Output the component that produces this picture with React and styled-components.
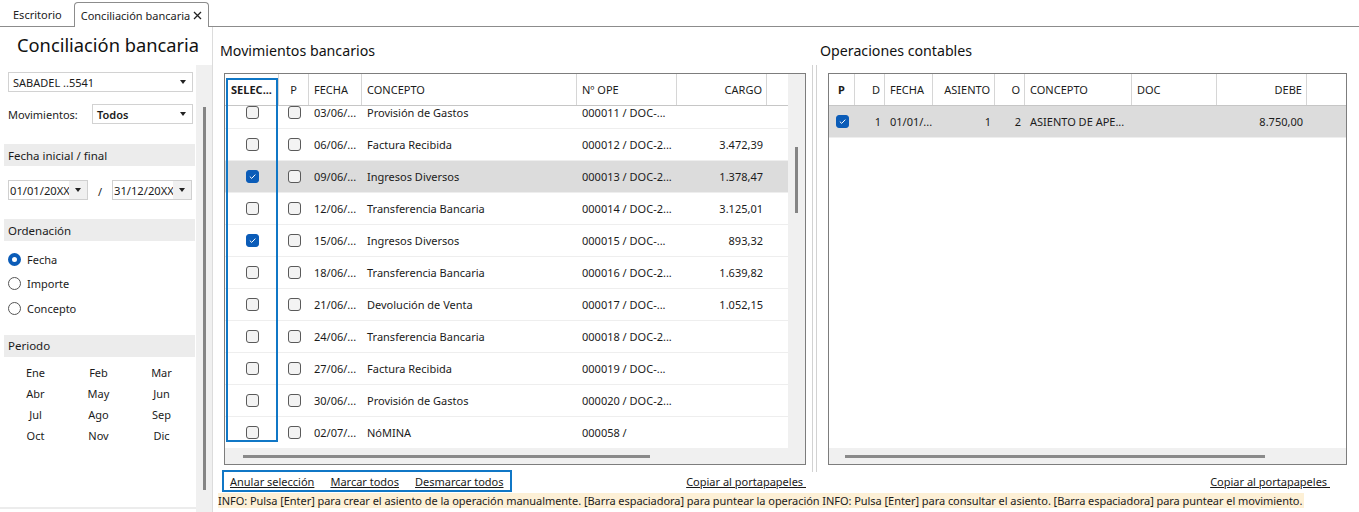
import React from "react";
import styled, { createGlobalStyle } from "styled-components";

const GlobalStyle = createGlobalStyle`
  html, body { margin: 0; padding: 0; background: #fff; }
  body {
    font-family: "Noto Sans", "Open Sans", sans-serif;
    font-size: 11px;
    color: #1b1b1b;
  }
  * { box-sizing: border-box; }
`;

const Page = styled.div`
  width: 1359px;
  height: 512px;
  overflow: hidden;
  display: flex;
  flex-direction: column;
`;

/* ---------- tabs ---------- */
const TabBar = styled.div`
  height: 27px;
  flex-shrink: 0;
  display: flex;
  align-items: flex-end;
  padding-left: 6px;
  border-bottom: 1px solid #8c8c8c;
`;

const Tab = styled.div`
  height: ${({ $active }) => ($active ? "25px" : "24px")};
  margin-bottom: ${({ $active }) => ($active ? "-1px" : "0")};
  padding: 0 6px;
  margin-right: ${({ $active }) => ($active ? "0" : "5px")};
  display: flex;
  align-items: center;
  gap: 3px;
  background: #fff;
  border: ${({ $active }) => ($active ? "1px solid #8c8c8c" : "1px solid transparent")};
  border-bottom: none;
  border-radius: 4px 4px 0 0;
  color: #222;
`;

const Body = styled.div`
  flex: 1;
  display: flex;
  min-height: 0;
`;

/* ---------- sidebar ---------- */
const Sidebar = styled.div`
  width: 213px;
  flex-shrink: 0;
  display: flex;
  flex-direction: column;
  border-right: 1px solid #dcdcdc;
`;

const SideTitle = styled.div`
  height: 38px;
  padding: 5px 0 0 17px;
  font-size: 18.3px;
  line-height: 26px;
  color: #111;
  white-space: nowrap;
`;

const SideScroll = styled.div`
  flex: 1;
  display: flex;
  min-height: 0;
`;

const SideContent = styled.div`
  width: 196px;
  padding: 7px 0 0 4px;
  margin-bottom: 3px;
  border-bottom: 2px solid #ececec;
`;

const ScrollTrack = styled.div`
  width: 16px;
  background: #f0f0f0;
  padding-left: 7px;
`;

const ScrollThumbV = styled.div`
  width: 3px;
  height: ${({ $h }) => $h}px;
  margin-top: ${({ $top }) => $top}px;
  background: #858585;
`;

const SelectBox = styled.div`
  width: ${({ $w }) => $w}px;
  height: 20px;
  margin-left: ${({ $ml }) => $ml || 0}px;
  border: 1px solid #d2d2d2;
  display: flex;
  align-items: center;
  justify-content: space-between;
  padding-left: 4px;
  font-weight: ${({ $bold }) => ($bold ? 600 : 400)};
`;

const Caret = styled.span`
  width: 0;
  height: 0;
  margin-right: ${({ $mr }) => $mr ?? 6}px;
  border-left: 3.5px solid transparent;
  border-right: 3.5px solid transparent;
  border-top: 4px solid #222;
`;

const FieldRow = styled.div`
  display: flex;
  align-items: center;
  margin-top: ${({ $mt }) => $mt}px;
  padding-left: 4px;
`;

const FieldLabel = styled.span`
  width: 84px;
`;

const SectionHead = styled.div`
  width: 191px;
  height: 22px;
  margin-top: ${({ $mt }) => $mt}px;
  background: #ececec;
  padding-left: 4px;
  display: flex;
  align-items: center;
  font-size: 11.5px;
  color: #1b1b1b;
`;

const DateBox = styled.div`
  width: 80px;
  height: 20px;
  border: 1px solid #d0d0d0;
  display: flex;
`;

const DateText = styled.span`
  flex: 1;
  padding-left: 1px;
  display: flex;
  align-items: center;
  font-size: 11.2px;
  white-space: nowrap;
  overflow: hidden;
`;

const DateBtn = styled.span`
  width: 18px;
  background: #f0f0f0;
  display: flex;
  align-items: center;
  justify-content: center;
`;

const Slash = styled.span`
  width: 24px;
  text-align: center;
  padding-top: 3px;
`;

const RadioList = styled.div`
  margin-top: 6px;
  padding-left: 4px;
`;

const RadioRow = styled.div`
  height: 24.5px;
  display: flex;
  align-items: center;
  gap: 6px;
`;

const RadioDot = styled.span`
  width: 13px;
  height: 13px;
  border-radius: 50%;
  border: ${({ $on }) => ($on ? "4px solid #0b5cb8" : "1px solid #555")};
  background: #fff;
`;

const MonthGrid = styled.div`
  margin-top: 5px;
  display: grid;
  grid-template-columns: repeat(3, 63px);
  grid-auto-rows: 21px;
  align-items: center;
  text-align: center;
`;

/* ---------- main ---------- */
const Main = styled.div`
  flex: 1;
  display: flex;
  flex-direction: column;
  padding-left: 5px;
  min-width: 0;
`;

const PanelsRow = styled.div`
  display: flex;
`;

const Panel = styled.div`
  width: ${({ $w }) => ($w ? `${$w}px` : "auto")};
  flex: ${({ $w }) => ($w ? "none" : "1")};
  display: flex;
  flex-direction: column;
`;

const PanelTitle = styled.div`
  padding: 14px 0 0 2px;
  height: 46px;
  font-size: 14.2px;
  line-height: 20px;
  color: #111;
`;

const Separator = styled.div`
  width: 10px;
  flex-shrink: 0;
  padding-left: 4px;
  padding-top: 38px;
`;

const SepLines = styled.div`
  width: 5px;
  height: 407px;
  border-left: 1px solid #d2d2d2;
  border-right: 1px solid #d2d2d2;
`;

const Grid = styled.div`
  position: relative;
  margin-left: ${({ $ml }) => $ml}px;
  width: ${({ $w }) => $w}px;
  height: 392px;
  border: 1px solid #7d7d7d;
  display: flex;
`;

const GridMain = styled.div`
  flex: 1;
  min-width: 0;
  display: flex;
  flex-direction: column;
`;

const HeadRow = styled.div`
  height: 32px;
  flex-shrink: 0;
  display: flex;
  border-bottom: 1px solid #c6c6c6;
`;

const Cell = styled.div`
  width: ${({ $w }) => ($w ? `${$w}px` : "auto")};
  flex: ${({ $w }) => ($w ? "none" : "1")};
  display: flex;
  align-items: center;
  justify-content: ${({ $align }) =>
    $align === "right" ? "flex-end" : $align === "center" ? "center" : "flex-start"};
  padding: 0 ${({ $align }) => ($align === "right" ? "4px" : "0")} 0
    ${({ $align }) => ($align === "left" ? "5px" : "0")};
  white-space: nowrap;
  overflow: hidden;
`;

const HeadCell = styled(Cell)`
  border-right: ${({ $last }) => ($last ? "none" : "1px solid #d6d6d6")};
  font-weight: ${({ $bold }) => ($bold ? 700 : 400)};
`;

const GridBody = styled.div`
  flex: 1;
  overflow: hidden;
`;

const BodyInner = styled.div`
  margin-top: ${({ $offset }) => $offset}px;
`;

const Row = styled.div`
  height: 32px;
  display: flex;
  border-bottom: 1px solid #eeeeee;
  background: ${({ $hl }) => ($hl ? "#dcdcdc" : "#fff")};
`;

const HScroll = styled.div`
  height: 16px;
  flex-shrink: 0;
  background: #f0f0f0;
  padding-top: 7px;
`;

const ThumbH = styled.div`
  height: 3px;
  width: ${({ $w }) => $w}px;
  margin-left: ${({ $left }) => $left}px;
  background: #8a8a8a;
`;

const VScroll = styled.div`
  width: 17px;
  flex-shrink: 0;
  background: #f0f0f0;
  padding-left: 7px;
`;

const FocusBox = styled.div`
  position: absolute;
  left: 1px;
  top: 4px;
  width: 52px;
  height: 364px;
  border: 2px solid #1077c6;
  pointer-events: none;
`;

const Box = styled.span`
  width: 13px;
  height: 13px;
  border-radius: 3px;
  border: 1px solid ${({ $on }) => ($on ? "#0b5cb8" : "#5a5a5a")};
  background: ${({ $on }) => ($on ? "#0b5cb8" : "#f3f3f3")};
  display: flex;
  align-items: center;
  justify-content: center;
`;

const LinksRow = styled.div`
  margin-top: 5px;
  height: 22px;
  display: flex;
  align-items: center;
  justify-content: space-between;
  padding-left: ${({ $pl }) => $pl || 0}px;
  padding-right: ${({ $pr }) => $pr || 0}px;
`;

const LinkBox = styled.div`
  height: 22px;
  display: flex;
  align-items: center;
  gap: 16px;
  padding: 0 6px;
  border: 2px solid #1077c6;
`;

const LinkText = styled.span`
  text-decoration: underline;
  color: #1a1a1a;
  white-space: pre;
`;

const InfoLine = styled.div`
  margin-top: 1px;
  height: 16px;
  white-space: nowrap;
`;

const InfoText = styled.span`
  background: #fdf0d6;
  line-height: 16px;
  letter-spacing: -0.05px;
  padding-right: 2px;
`;

const Checkbox = ({ on }) => (
  <Box $on={on}>
    {on && (
      <svg width="9" height="9" viewBox="0 0 9 9">
        <path d="M1.8 4.6 L3.7 6.4 L7.3 2.6" fill="none" stroke="#fff" strokeWidth="1" />
      </svg>
    )}
  </Box>
);

const leftCols = [
  { key: "sel", label: "SELEC...", w: 54, align: "center", bold: true, check: true },
  { key: "p", label: "P", w: 30, align: "center", check: true },
  { key: "fecha", label: "FECHA", w: 53, align: "left" },
  { key: "concepto", label: "CONCEPTO", w: 215, align: "left" },
  { key: "ope", label: "Nº OPE", w: 100, align: "left" },
  { key: "cargo", label: "CARGO", w: 90, align: "right" },
  { key: "rest", label: "", align: "left", last: true },
];

const leftRows = [
  { sel: false, p: false, fecha: "03/06/...", concepto: "Provisión de Gastos", ope: "000011 / DOC-...", cargo: "" },
  { sel: false, p: false, fecha: "06/06/...", concepto: "Factura Recibida", ope: "000012 / DOC-2...", cargo: "3.472,39" },
  { sel: true, p: false, fecha: "09/06/...", concepto: "Ingresos Diversos", ope: "000013 / DOC-2...", cargo: "1.378,47", hl: true },
  { sel: false, p: false, fecha: "12/06/...", concepto: "Transferencia Bancaria", ope: "000014 / DOC-2...", cargo: "3.125,01" },
  { sel: true, p: false, fecha: "15/06/...", concepto: "Ingresos Diversos", ope: "000015 / DOC-...", cargo: "893,32" },
  { sel: false, p: false, fecha: "18/06/...", concepto: "Transferencia Bancaria", ope: "000016 / DOC-2...", cargo: "1.639,82" },
  { sel: false, p: false, fecha: "21/06/...", concepto: "Devolución de Venta", ope: "000017 / DOC-...", cargo: "1.052,15" },
  { sel: false, p: false, fecha: "24/06/...", concepto: "Transferencia Bancaria", ope: "000018 / DOC-2...", cargo: "" },
  { sel: false, p: false, fecha: "27/06/...", concepto: "Factura Recibida", ope: "000019 / DOC-...", cargo: "" },
  { sel: false, p: false, fecha: "30/06/...", concepto: "Provisión de Gastos", ope: "000020 / DOC-2...", cargo: "" },
  { sel: false, p: false, fecha: "02/07/...", concepto: "NóMINA", ope: "000058 /", cargo: "" },
];

const rightCols = [
  { key: "p", label: "P", w: 26, align: "center", bold: true, check: true },
  { key: "d", label: "D", w: 30, align: "right" },
  { key: "fecha", label: "FECHA", w: 48, align: "left" },
  { key: "asiento", label: "ASIENTO", w: 62, align: "right" },
  { key: "o", label: "O", w: 30, align: "right" },
  { key: "concepto", label: "CONCEPTO", w: 107, align: "left" },
  { key: "doc", label: "DOC", w: 85, align: "left" },
  { key: "debe", label: "DEBE", w: 90, align: "right" },
  { key: "rest", label: "", align: "left", last: true },
];

const rightRows = [
  { p: true, d: "1", fecha: "01/01/...", asiento: "1", o: "2", concepto: "ASIENTO DE APE...", doc: "", debe: "8.750,00", hl: true },
];

const months = ["Ene", "Feb", "Mar", "Abr", "May", "Jun", "Jul", "Ago", "Sep", "Oct", "Nov", "Dic"];

const DataGrid = ({ cols, rows, offset, ml, w, thumb, vthumb, focus }) => (
  <Grid $ml={ml} $w={w}>
    <GridMain>
      <HeadRow>
        {cols.map((c) => (
          <HeadCell key={c.key} $w={c.w} $align={c.align} $bold={c.bold} $last={c.last}>
            {c.label}
          </HeadCell>
        ))}
      </HeadRow>
      <GridBody>
        <BodyInner $offset={offset}>
          {rows.map((r, i) => (
            <Row key={i} $hl={r.hl}>
              {cols.map((c) => (
                <Cell key={c.key} $w={c.w} $align={c.align}>
                  {c.check ? <Checkbox on={r[c.key]} /> : r[c.key]}
                </Cell>
              ))}
            </Row>
          ))}
        </BodyInner>
      </GridBody>
      <HScroll>
        <ThumbH $left={thumb[0]} $w={thumb[1]} />
      </HScroll>
    </GridMain>
    {vthumb && (
      <VScroll>
        <ScrollThumbV $top={vthumb[0]} $h={vthumb[1]} />
      </VScroll>
    )}
    {focus && <FocusBox />}
  </Grid>
);

export default function App() {
  return (
    <Page>
      <GlobalStyle />
      <TabBar>
        <Tab>Escritorio</Tab>
        <Tab $active>
          Conciliación bancaria
          <svg width="9" height="9" viewBox="0 0 9 9">
            <path d="M1 1 L8 8 M8 1 L1 8" stroke="#222" strokeWidth="1.3" />
          </svg>
        </Tab>
      </TabBar>
      <Body>
        <Sidebar>
          <SideTitle>Conciliación bancaria</SideTitle>
          <SideScroll>
            <SideContent>
              <SelectBox $w={185} $ml={4}>
                SABADEL ..5541
                <Caret />
              </SelectBox>
              <FieldRow $mt={12}>
                <FieldLabel>Movimientos:</FieldLabel>
                <SelectBox $w={101} $bold>
                  Todos
                  <Caret />
                </SelectBox>
              </FieldRow>
              <SectionHead $mt={20}>Fecha inicial / final</SectionHead>
              <FieldRow $mt={14}>
                <DateBox>
                  <DateText>01/01/20XX</DateText>
                  <DateBtn>
                    <Caret $mr={0} />
                  </DateBtn>
                </DateBox>
                <Slash>/</Slash>
                <DateBox>
                  <DateText>31/12/20XX</DateText>
                  <DateBtn>
                    <Caret $mr={0} />
                  </DateBtn>
                </DateBox>
              </FieldRow>
              <SectionHead $mt={19}>Ordenación</SectionHead>
              <RadioList>
                <RadioRow>
                  <RadioDot $on />
                  Fecha
                </RadioRow>
                <RadioRow>
                  <RadioDot />
                  Importe
                </RadioRow>
                <RadioRow>
                  <RadioDot />
                  Concepto
                </RadioRow>
              </RadioList>
              <SectionHead $mt={14}>Periodo</SectionHead>
              <MonthGrid>
                {months.map((m) => (
                  <span key={m}>{m}</span>
                ))}
              </MonthGrid>
            </SideContent>
            <ScrollTrack>
              <ScrollThumbV $top={42} $h={383} />
            </ScrollTrack>
          </SideScroll>
        </Sidebar>
        <Main>
          <PanelsRow>
            <Panel $w={590}>
              <PanelTitle>Movimientos bancarios</PanelTitle>
              <DataGrid
                cols={leftCols}
                rows={leftRows}
                offset={-9}
                ml={6}
                w={582}
                thumb={[18, 407]}
                vthumb={[73, 66]}
                focus
              />
              <LinksRow $pl={4} $pr={2}>
                <LinkBox>
                  <LinkText>Anular selección</LinkText>
                  <LinkText>Marcar todos</LinkText>
                  <LinkText>Desmarcar todos</LinkText>
                </LinkBox>
                <LinkText>Copiar al portapapeles </LinkText>
              </LinksRow>
            </Panel>
            <Separator>
              <SepLines />
            </Separator>
            <Panel>
              <PanelTitle>Operaciones contables</PanelTitle>
              <DataGrid
                cols={rightCols}
                rows={rightRows}
                offset={0}
                ml={10}
                w={519}
                thumb={[16, 420]}
              />
              <LinksRow $pr={29}>
                <span />
                <LinkText>Copiar al portapapeles </LinkText>
              </LinksRow>
            </Panel>
          </PanelsRow>
          <InfoLine>
            <InfoText>
              INFO: Pulsa [Enter] para crear el asiento de la operación manualmente. [Barra espaciadora] para puntear la operación INFO: Pulsa [Enter] para consultar el asiento. [Barra espaciadora] para puntear el movimiento.
            </InfoText>
          </InfoLine>
        </Main>
      </Body>
    </Page>
  );
}
